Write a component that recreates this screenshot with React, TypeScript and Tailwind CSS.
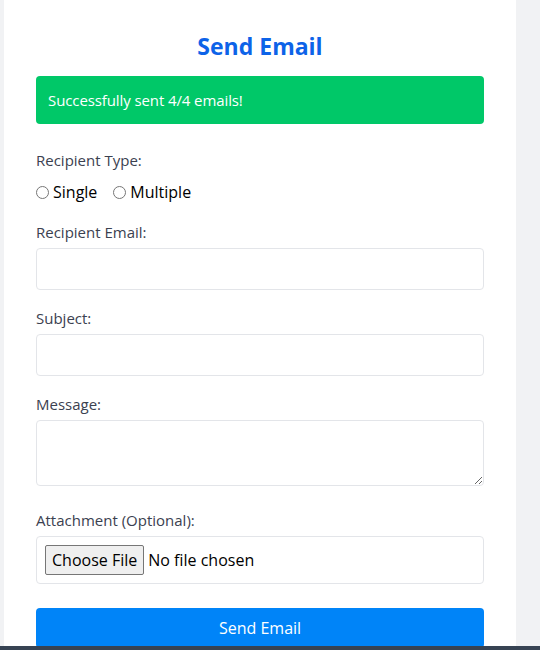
import React, { useState } from 'react';

const font = { fontFamily: '"Open Sans", "Noto Sans", sans-serif' };

export default function App() {
  const [type, setType] = useState<string>('');

  return (
    <div className="min-h-screen bg-[#f1f2f4] font-['Open_Sans',sans-serif]">
      <div className="ml-1 w-[512px] bg-white px-8 pt-[30px] pb-10">
        <h2 className="text-center text-[23px] font-bold leading-8 text-[#0d63e8] mb-[14px]">Send Email</h2>

        <div className="rounded bg-[#00c868] px-3 py-3 text-[15px] leading-6 tracking-[-0.1px] text-white mb-6">
          Successfully sent 4/4 emails!
        </div>

        <label className="block text-[15px] leading-6 text-[#3b4150] mb-2">Recipient Type:</label>
        <div className="flex items-center gap-4 text-base leading-6 text-black mb-4">
          <label className="flex items-center gap-1">
            <input type="radio" name="rtype" checked={type === 'single'} onChange={() => setType('single')} className="m-0 h-[13px] w-[13px]" />
            Single
          </label>
          <label className="flex items-center gap-1">
            <input type="radio" name="rtype" checked={type === 'multiple'} onChange={() => setType('multiple')} className="m-0 h-[13px] w-[13px]" />
            Multiple
          </label>
        </div>

        <div className="mb-4">
          <label className="block text-[15px] leading-6 text-[#3b4150] mb-1">Recipient Email:</label>
          <input type="email" className="block h-[42px] w-full rounded border border-[#e3e5e9] px-3 outline-none" />
        </div>

        <div className="mb-4">
          <label className="block text-[15px] leading-6 text-[#3b4150] mb-1">Subject:</label>
          <input type="text" className="block h-[42px] w-full rounded border border-[#e3e5e9] px-3 outline-none" />
        </div>

        <div className="mb-[22px]">
          <label className="block text-[15px] leading-6 text-[#3b4150] mb-1">Message:</label>
          <textarea rows={2} className="block h-[66px] w-full rounded border border-[#e3e5e9] px-3 py-2 outline-none" />
        </div>

        <div className="mb-6">
          <label className="block text-[15px] leading-6 text-[#3b4150] mb-1">Attachment (Optional):</label>
          <div className="rounded border border-[#e3e5e9] p-2">
            <input type="file" style={font} className="block text-base leading-6 text-black file:mr-1 file:rounded-[2px] file:border file:border-[#767676] file:bg-[#efefef] file:px-[6px] file:py-[2px] file:text-base file:text-black" />
          </div>
        </div>

        <button className="block h-10 w-full rounded bg-[#0084f8] text-base text-white">Send Email</button>
      </div>

      <div className="fixed inset-x-0 bottom-0 h-1 bg-[#374353]" />
    </div>
  );
}
